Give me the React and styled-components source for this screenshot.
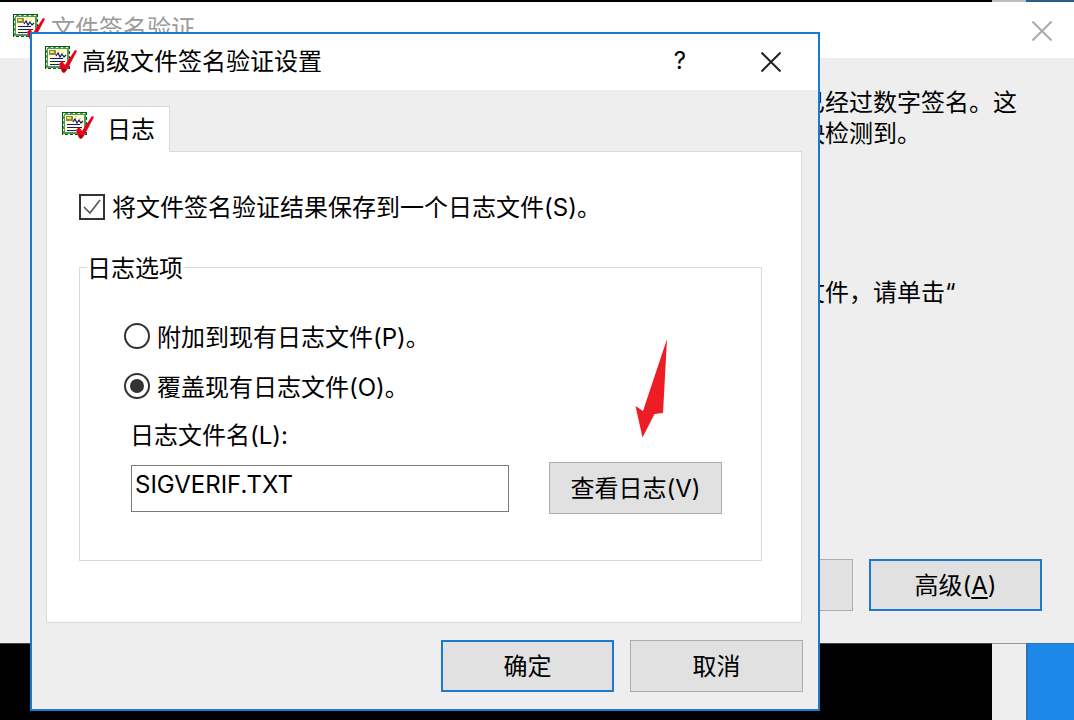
import styled, { createGlobalStyle } from "styled-components";

const GlobalStyle = createGlobalStyle`
  html, body {
    margin: 0;
    padding: 0;
    background: #000;
  }
  * {
    box-sizing: border-box;
  }
  body {
    font-family: Inter, "Noto Sans CJK SC", sans-serif;
    font-size: 24px;
    color: #000;
  }
`;

const Desktop = styled.div`
  position: relative;
  width: 1074px;
  height: 720px;
  overflow: hidden;
  background: #000;
`;

const TopStrip = styled.div`
  display: flex;
  height: 2px;
  background: #000;
  i {
    display: block;
  }
  i:nth-child(1) {
    flex: 1;
  }
  i:nth-child(2) {
    width: 34px;
    background: #bdbdbd;
  }
  i:nth-child(3) {
    width: 48px;
    background: #27608f;
  }
`;

/* window behind the dialog */
const BaseWindow = styled.div`
  height: 641px;
  display: flex;
  flex-direction: column;
  background: #eeeeee;
`;

const BaseTitle = styled.div`
  height: 56px;
  flex-shrink: 0;
  background: #fff;
  display: flex;
  align-items: flex-start;
  padding: 11px 22px 0 13px;
  color: #9a9a9a;
  gap: 6px;
  line-height: 32px;
  svg.close {
    margin: 8px 0 0 auto;
  }
`;

const BaseText = styled.div`
  flex: 1;
  padding: 29px 0 0 57px;
  line-height: 31px;
  white-space: nowrap;
  p {
    margin: 0;
  }
  p + p {
    margin-top: 128px;
  }
`;

const BaseFooter = styled.div`
  display: flex;
  justify-content: flex-end;
  gap: 16px;
  padding: 0 32px 32px 0;
`;

const Button = styled.button`
  width: 173px;
  height: 52px;
  padding: 0 0 3px;
  font: inherit;
  color: #000;
  background: #e1e1e1;
  border: ${(p) => (p.$primary ? "2px solid #1a7ad0" : "1px solid #adadad")};
  flex-shrink: 0;
  u {
    text-underline-offset: 3px;
  }
`;

const BottomStrip = styled.div`
  height: 77px;
  display: flex;
  border-top: 1px solid #444;
  i {
    display: block;
  }
  i:nth-child(1) {
    flex: 1;
  }
  i:nth-child(2) {
    width: 34px;
    background: #eeeeee;
    margin-top: -1px;
    border-top: 1px solid #999;
  }
  i:nth-child(3) {
    width: 48px;
    margin-top: -1px;
    background: #1e88e8;
    border-left: 2px solid #2e75b0;
    border-top: 1px solid #2e75b0;
  }
`;

const Dialog = styled.div`
  position: absolute;
  left: 30px;
  top: 32px;
  width: 790px;
  height: 679px;
  border: 2px solid #1a7ad0;
  background: #eeeeee;
  display: flex;
  flex-direction: column;
`;

const DialogTitle = styled.div`
  height: 56px;
  flex-shrink: 0;
  background: #fff;
  display: flex;
  align-items: center;
  padding: 0 37px 0 13px;
  gap: 5px;
  svg:first-child {
    margin-top: -6px;
  }
  span {
    margin-top: -5px;
  }
  span.help {
    margin-left: auto;
    margin-right: 70px;
    margin-top: -3px;
    font-size: 24px;
  }
`;

const DialogBody = styled.div`
  flex: 1;
  padding: 16px 16px 16px 14px;
  display: flex;
  flex-direction: column;
`;

const TabBar = styled.div`
  display: flex;
  margin-bottom: -1px;
  position: relative;
  z-index: 1;
`;

const Tab = styled.div`
  width: 124px;
  height: 46px;
  background: #fff;
  border: 1px solid #d9d9d9;
  border-bottom: none;
  display: flex;
  align-items: center;
  gap: 13px;
  padding: 0 0 0 15px;
  svg {
    margin-top: -10px;
  }
  span {
    margin-top: -4px;
  }
`;

const Panel = styled.div`
  height: 472px;
  flex-shrink: 0;
  background: #fff;
  border: 1px solid #d9d9d9;
  padding: 42px 39px 0 32px;
  position: relative;
`;

const CheckRow = styled.label`
  display: flex;
  align-items: center;
  gap: 7px;
  height: 26px;
  white-space: nowrap;
  span:last-child {
    margin-top: -3px;
  }
`;

const CheckBox = styled.span`
  width: 26px;
  height: 26px;
  border: 2px solid #333;
  display: flex;
  align-items: center;
  justify-content: center;
`;

const GroupBox = styled.fieldset`
  margin: 33px 0 0;
  padding: 42px 0 0 44px;
  height: 308px;
  border: 1px solid #d9d9d9;
  min-width: 0;
  legend {
    margin-left: -37px;
    padding: 4px 0 0;
    line-height: 24px;
  }
`;

const RadioRow = styled.label`
  display: flex;
  align-items: center;
  gap: 7px;
  height: 26px;
  margin-bottom: 24px;
  white-space: nowrap;
  span:last-child {
    margin-top: -2px;
  }
`;

const Radio = styled.span`
  width: 26px;
  height: 26px;
  border-radius: 50%;
  border: 2px solid #333;
  display: flex;
  align-items: center;
  justify-content: center;
  &::after {
    content: "";
    width: 14px;
    height: 14px;
    border-radius: 50%;
    background: ${(p) => (p.$checked ? "#333" : "transparent")};
  }
`;

const FieldLabel = styled.div`
  margin-left: 6px;
  line-height: 26px;
  margin-top: 2px;
`;

const FieldRow = styled.div`
  display: flex;
  align-items: flex-start;
  gap: 40px;
  margin: 13px 0 0 7px;
`;

const FileInput = styled.div`
  width: 378px;
  height: 47px;
  margin-top: 3px;
  border: 1px solid #7a7a7a;
  padding: 1px 0 0 3px;
  line-height: 36px;
`;

const Arrow = styled.svg`
  position: absolute;
  left: 587px;
  top: 187px;
`;

const DialogFooter = styled.div`
  display: flex;
  justify-content: flex-end;
  gap: 16px;
  margin-top: 17px;
  margin-right: -1px;
`;

const CertIcon = () => (
  <svg width="32" height="28" viewBox="0 0 32 28" shapeRendering="crispEdges">
    <rect x="0" y="1" width="25" height="23" fill="#0b5a14" />
    <rect x="1" y="2" width="23" height="21" fill="#4f9a55" />
    <rect x="1" y="2" width="23" height="21" fill="none" stroke="#e8f4e8" strokeWidth="1" strokeDasharray="2 3" />
    <rect x="3" y="4" width="19" height="17" fill="#ffffd8" />
    <rect x="4" y="5" width="7" height="5" fill="#8c8c3c" />
    <rect x="5" y="6" width="4" height="2" fill="#dede8c" />
    <rect x="13" y="5" width="2" height="1" fill="#f4d820" />
    <rect x="17" y="7" width="2" height="1" fill="#f4d820" />
    <path d="M11 11 L13 8 L15 12 L17 9 L19 12 L21 10" fill="none" stroke="#14148c" strokeWidth="1.2" shapeRendering="auto" />
    <rect x="5" y="13" width="13" height="1" fill="#1414a0" />
    <rect x="5" y="16" width="15" height="1" fill="#1414a0" />
    <rect x="5" y="19" width="9" height="1" fill="#1414a0" />
    <path d="M14 19 L17 16 L20 20 L30 5 L32 6 L22 25 L19 28 L17 27 Z" fill="#e8001c" shapeRendering="auto" />
    <path d="M17 24 L19 28 L21 25 L20 24 Z" fill="#8d0010" shapeRendering="auto" />
  </svg>
);

const CloseIcon = ({ color, className }) => (
  <svg className={className} width="20" height="20" viewBox="0 0 20 20">
    <path d="M0.5 0.5 L19.5 19.5 M19.5 0.5 L0.5 19.5" stroke={color} strokeWidth="2" fill="none" />
  </svg>
);

const App = () => {
  return (
    <Desktop>
      <GlobalStyle />
      <TopStrip>
        <i />
        <i />
        <i />
      </TopStrip>
      <BaseWindow>
        <BaseTitle>
          <CertIcon />
          <span>文件签名验证</span>
          <CloseIcon className="close" color="#aaaaaa" />
        </BaseTitle>
        <BaseText>
          <p>
            为了帮助维护系统的完整性，操作系统中所有的关键系统文件现在全都已经过数字签名。这
            <br />
            样，对这些系统文件所做的任何未经授权的更改都可以在第一时间被尽快检测到。
          </p>
          <p>如果要查看本计算机上所有未经过数字签名的关键系统和非系统的其他文件，请单击“</p>
        </BaseText>
        <BaseFooter>
          <Button>开始(S)</Button>
          <Button $primary>
            高级(<u>A</u>)
          </Button>
        </BaseFooter>
      </BaseWindow>
      <BottomStrip>
        <i />
        <i />
        <i />
      </BottomStrip>

      <Dialog>
        <DialogTitle>
          <CertIcon />
          <span>高级文件签名验证设置</span>
          <span className="help">?</span>
          <CloseIcon color="#222222" />
        </DialogTitle>
        <DialogBody>
          <TabBar>
            <Tab>
              <CertIcon />
              <span>日志</span>
            </Tab>
          </TabBar>
          <Panel>
            <CheckRow>
              <CheckBox>
                <svg width="18" height="16" viewBox="0 0 18 16">
                  <path d="M1 8 L7 14 L17 1" stroke="#555" strokeWidth="1.6" fill="none" />
                </svg>
              </CheckBox>
              <span>将文件签名验证结果保存到一个日志文件(S)。</span>
            </CheckRow>
            <GroupBox>
              <legend>日志选项</legend>
              <RadioRow>
                <Radio />
                <span>附加到现有日志文件(P)。</span>
              </RadioRow>
              <RadioRow>
                <Radio $checked />
                <span>覆盖现有日志文件(O)。</span>
              </RadioRow>
              <FieldLabel>日志文件名(L):</FieldLabel>
              <FieldRow>
                <FileInput>SIGVERIF.TXT</FileInput>
                <Button>查看日志(V)</Button>
              </FieldRow>
            </GroupBox>
            <Arrow width="34" height="100" viewBox="0 0 34 100">
              <path d="M33 0 L29 74 L20.500 75 L8.500 98.500 L1.500 67 L9 72 Z" fill="#ee1c25" />
            </Arrow>
          </Panel>
          <DialogFooter>
            <Button $primary>确定</Button>
            <Button>取消</Button>
          </DialogFooter>
        </DialogBody>
      </Dialog>
    </Desktop>
  );
};

export default App;
